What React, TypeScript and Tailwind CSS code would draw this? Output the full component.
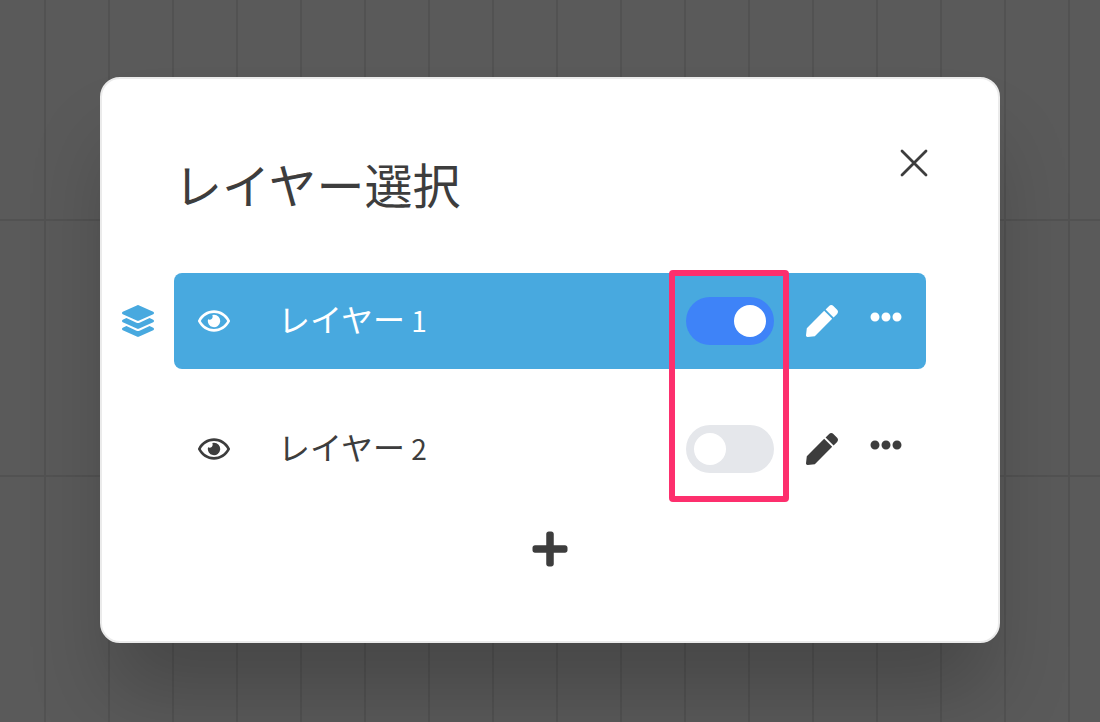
import React, { useState } from 'react';
import { FaEllipsisH, FaLayerGroup, FaPen, FaPlus, FaRegEye } from 'react-icons/fa';

interface Layer {
  id: number;
  enabled: boolean;
}

interface LayerRowProps {
  layer: Layer;
  selected: boolean;
  onToggle: (id: number) => void;
}

const initialLayers: Layer[] = [
  { id: 1, enabled: true },
  { id: 2, enabled: false },
];

const LayerRow: React.FC<LayerRowProps> = ({ layer, selected, onToggle }) => {
  const inputId = `layer-${layer.id}`;

  return (
    <li className="flex items-center gap-5">
      <div className="w-8 shrink-0 text-[#48a9df]">{selected && <FaLayerGroup size={32} />}</div>
      <div
        className={`${
          selected ? 'bg-[#48a9df] text-white' : 'text-[#3d3d3d]'
        } flex h-24 flex-1 items-center rounded-lg px-6`}
      >
        <button type="button" aria-label="表示">
          <FaRegEye className="w-8 h-8" />
        </button>
        <label htmlFor={inputId} className="ml-12 flex-1 pb-1 text-[32px] leading-12">
          レイヤー<span className="text-[28px]"> {layer.id}</span>
        </label>
        <input
          id={inputId}
          type="checkbox"
          role="switch"
          checked={layer.enabled}
          onChange={() => onToggle(layer.id)}
          className="flex h-12 w-22 appearance-none items-center rounded-full bg-gray-200 px-2 before:size-8 before:rounded-full before:bg-white checked:justify-end checked:bg-[#3e83f8]"
        />
        <button type="button" aria-label="編集" className="ml-8">
          <FaPen size={32} />
        </button>
        <button type="button" aria-label="メニュー" className="ml-8 pb-2">
          <FaEllipsisH size={32} />
        </button>
      </div>
    </li>
  );
};

const App: React.FC = () => {
  const [layers, setLayers] = useState(initialLayers);

  const handleToggle = (id: number) => {
    setLayers(layers.map((l) => (l.id === id ? { ...l, enabled: !l.enabled } : l)));
  };

  return (
    <div className="min-h-screen overflow-hidden bg-[#5a5a5a] bg-[linear-gradient(to_right,#525252_2px,transparent_2px),linear-gradient(to_bottom,#525252_2px,transparent_2px)] bg-[size:64px_256px] bg-[position:44px_219px] px-[100px] pt-[77px] font-['Noto_Sans_CJK_JP',sans-serif] text-[#3d3d3d]">
      <div
        role="dialog"
        aria-labelledby="dialog-title"
        className="mx-auto max-w-[900px] rounded-[20px] border-2 border-[#ebebeb] bg-white pt-[70px] pr-[72px] pb-[72px] pl-5 shadow-[0_60px_80px_-10px_rgba(0,0,0,0.21)]"
      >
        <header className="-mr-0.5 flex items-start justify-between pl-[52px]">
          <h1 id="dialog-title" className="text-5xl leading-[68px]">
            レイヤー選択
          </h1>
          <button type="button" aria-label="閉じる">
            <svg
              className="size-7"
              viewBox="0 0 28 28"
              fill="none"
              stroke="currentColor"
              strokeWidth="2.8"
              strokeLinecap="round"
            >
              <path d="M2 2l24 24M26 2L2 26" />
            </svg>
          </button>
        </header>

        <div className="relative mt-14">
          <ul className="flex flex-col gap-8">
            {layers.map((layer) => (
              <LayerRow key={layer.id} layer={layer} selected={layer.id === 1} onToggle={handleToggle} />
            ))}
          </ul>
          {/* highlight around the switches */}
          <div className="pointer-events-none absolute -top-[3px] right-[137px] h-[232px] w-[120px] rounded border-6 border-[#fd2f6d]" />
        </div>

        <div className="mt-8 flex justify-center pl-[52px]">
          <button type="button" aria-label="レイヤーを追加">
            <FaPlus size={40} />
          </button>
        </div>
      </div>
    </div>
  );
};

export default App;
